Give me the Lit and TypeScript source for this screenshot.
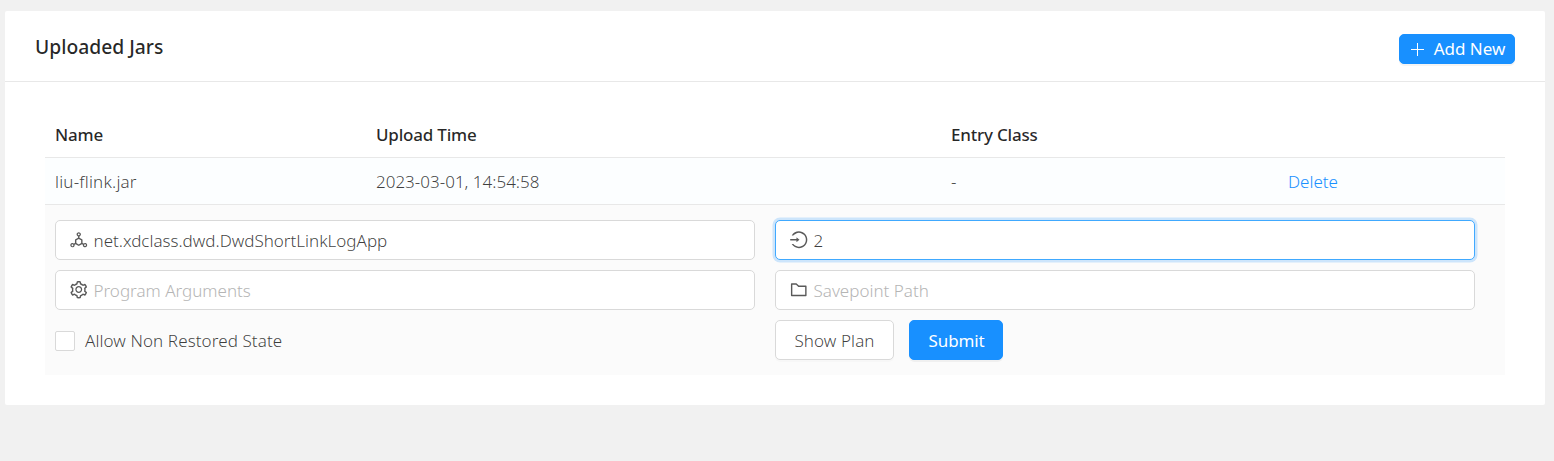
import { LitElement, html, css, svg } from "lit";
import { customElement } from "lit/decorators.js";

const ICONS: Record<string, string> = {
  deploy:
    "M888.3 693.2c-42.5-24.6-94.3-18-129.2 12.8l-53-30.7V523.6c0-15.7-8.4-30.3-22-38.1l-136-78.3v-67.1c44.2-15 76-56.8 76-106.1 0-61.9-50.1-112-112-112s-112 50.1-112 112c0 49.3 31.8 91.1 76 106.1v67.1l-136 78.3c-13.6 7.8-22 22.4-22 38.1v151.6l-53 30.7c-34.9-30.8-86.8-37.4-129.2-12.8-53.5 31-71.7 99.4-41 152.9 30.8 53.5 98.9 71.9 152.2 41 42.5-24.6 62.7-73 53.6-118.8l48.7-28.3 140.6 81c6.8 3.9 14.4 5.9 22 5.9s15.2-2 22-5.9L674.5 740l48.7 28.3c-9.1 45.7 11.2 94.2 53.6 118.8 53.3 30.9 121.5 12.6 152.2-41 30.8-53.6 12.6-122-40.7-152.9zm-673 138.4a47.6 47.6 0 01-65.2-17.6c-13.2-22.9-5.4-52.3 17.5-65.5a47.6 47.6 0 0165.2 17.6c13.2 22.9 5.4 52.3-17.5 65.5zM464 234a48.01 48.01 0 0196 0 48.01 48.01 0 01-96 0zm170 446.2l-122 70.3-122-70.3V539.8l122-70.3 122 70.3v140.4zm239.9 133.9c-13.2 22.9-42.4 30.8-65.2 17.6-22.8-13.2-30.7-42.6-17.5-65.5s42.4-30.8 65.2-17.6c22.9 13.2 30.7 42.5 17.5 65.5z",
  login:
    "M521.7 82c-152.5-.4-286.7 78.5-363.4 197.7-3.4 5.3.4 12.3 6.7 12.3h70.3c4.8 0 9.3-2.1 12.3-5.8 7-8.5 14.5-16.7 22.4-24.5 32.6-32.5 70.5-58.1 112.7-75.9 43.6-18.4 90-27.8 137.9-27.8 47.9 0 94.3 9.3 137.9 27.8 42.2 17.8 80.1 43.4 112.7 75.9 32.6 32.5 58.1 70.4 76 112.5C865.7 417.8 875 464.1 875 512c0 47.9-9.4 94.2-27.8 137.8-17.8 42.1-43.4 80-76 112.5s-70.5 58.1-112.7 75.9A352.8 352.8 0 01520.6 866c-47.9 0-94.3-9.4-137.9-27.8A353.84 353.84 0 01270 762.3c-7.9-7.9-15.3-16.1-22.4-24.5-3-3.7-7.6-5.8-12.3-5.8H165c-6.3 0-10.2 7-6.7 12.3C234.9 863.2 368.5 942 520.6 942c236.2 0 428-190.1 430.4-425.6C953.4 277.1 761.3 82.6 521.7 82zM395.02 624v-76h-314c-4.4 0-8-3.6-8-8v-56c0-4.4 3.6-8 8-8h314v-76c0-6.7 7.8-10.5 13-6.3l141.9 112a8 8 0 010 12.6l-141.9 112c-5.2 4.1-13 .4-13-6.3z",
  setting:
    "M924.8 625.7l-65.5-56c3.1-19 4.7-38.4 4.7-57.8s-1.6-38.8-4.7-57.8l65.5-56a32.03 32.03 0 009.3-35.2l-.9-2.6a443.74 443.74 0 00-79.7-137.9l-1.8-2.1a32.12 32.12 0 00-35.1-9.5l-81.3 28.9c-30-24.6-63.5-44-99.7-57.6l-15.7-85a32.05 32.05 0 00-25.8-25.7l-2.7-.5c-52.1-9.4-106.9-9.4-159 0l-2.7.5a32.05 32.05 0 00-25.8 25.7l-15.8 85.4a351.86 351.86 0 00-99 57.4l-81.9-29.1a32 32 0 00-35.1 9.5l-1.8 2.1a446.02 446.02 0 00-79.7 137.9l-.9 2.6c-4.5 12.5-.8 26.5 9.3 35.2l66.3 56.6c-3.1 18.8-4.6 38-4.6 57.1 0 19.2 1.5 38.4 4.6 57.1L99 625.5a32.03 32.03 0 00-9.3 35.2l.9 2.6c18.1 50.4 44.9 96.9 79.7 137.9l1.8 2.1a32.12 32.12 0 0035.1 9.5l81.9-29.1c29.8 24.5 63.1 43.9 99 57.4l15.8 85.4a32.05 32.05 0 0025.8 25.7l2.7.5a449.4 449.4 0 00159 0l2.7-.5a32.05 32.05 0 0025.8-25.7l15.7-85a350 350 0 0099.7-57.6l81.3 28.9a32 32 0 0035.1-9.5l1.8-2.1c34.8-41.1 61.6-87.5 79.7-137.9l.9-2.6c4.5-12.3.8-26.3-9.3-35zM788.3 465.9c2.5 15.1 3.8 30.6 3.8 46.1s-1.3 31-3.8 46.1l-6.6 40.1 74.7 63.9a370.03 370.03 0 01-42.6 73.6L721 702.8l-31.4 25.8c-23.9 19.6-50.5 35-79.3 45.8l-38.1 14.3-17.9 97a377.5 377.5 0 01-85 0l-17.9-97.2-37.8-14.5c-28.5-10.8-55-26.2-78.7-45.7l-31.4-25.9-93.4 33.2c-17-22.9-31.2-47.6-42.6-73.6l75.5-64.5-6.5-40c-2.4-14.9-3.7-30.3-3.7-45.5 0-15.3 1.2-30.6 3.7-45.5l6.5-40-75.5-64.5c11.3-26.1 25.6-50.7 42.6-73.6l93.4 33.2 31.4-25.9c23.7-19.5 50.2-34.9 78.7-45.7l37.9-14.3 17.9-97.2c28.1-3.2 56.8-3.2 85 0l17.9 97 38.1 14.3c28.7 10.8 55.4 26.2 79.3 45.8l31.4 25.8 92.8-32.9c17 22.9 31.2 47.6 42.6 73.6L781.8 426l6.5 39.9zM512 326c-97.2 0-176 78.8-176 176s78.8 176 176 176 176-78.8 176-176-78.8-176-176-176zm79.2 255.2A111.6 111.6 0 01512 614c-29.9 0-58-11.7-79.2-32.8A111.6 111.6 0 01400 502c0-29.9 11.7-58 32.8-79.2C454 401.6 482.1 390 512 390c29.9 0 58 11.6 79.2 32.8A111.6 111.6 0 01624 502c0 29.9-11.7 58-32.8 79.2z",
  folder:
    "M880 298.4H521L403.7 186.2a8.15 8.15 0 00-5.5-2.2H144c-17.7 0-32 14.3-32 32v592c0 17.7 14.3 32 32 32h736c17.7 0 32-14.3 32-32V330.4c0-17.7-14.3-32-32-32zM840 768H184V256h188.5l119.6 114.4H840V768z",
};

const icon = (name: string) => html`<svg class="icon" viewBox="64 64 896 896">${svg`<path d=${ICONS[name]}></path>`}</svg>`;

@customElement("app-root")
export class AppRoot extends LitElement {
  static styles = css`
    :host { display: block; box-sizing: border-box; height: 461px; padding: 11px 9px 0 5px; background: #f1f1f1;
      font: 300 17px/26px "Noto Sans", "Open Sans", sans-serif; color: rgba(0, 0, 0, 0.76); }
    * { box-sizing: border-box; }
    .card { background: #fff; border-radius: 2px; height: 394px; }
    .head { display: flex; justify-content: space-between; align-items: center; height: 71px; padding: 0 30px;
      border-bottom: 1px solid #e8e8e8; }
    .title { font-size: 19.3px; font-weight: 500; color: rgba(0, 0, 0, 0.85); padding-top: 1px; }
    .btn { display: flex; align-items: center; justify-content: center; height: 40px; border-radius: 5px; border: 1px solid #d9d9d9;
      background: #fff; box-shadow: 0 2px 0 rgba(0, 0, 0, 0.016); white-space: nowrap; }
    .btn span { padding-top: 2px; }
    .primary { background: #1890ff; border-color: #1890ff; color: #fff; box-shadow: 0 2px 0 rgba(0, 0, 0, 0.045); font-weight: 400; }
    .add { width: 116px; height: 30px; margin-top: 5px; gap: 10px; padding-left: 2px; }
    .add span { padding-top: 0; }
    .plus { width: 13px; height: 13px; stroke: #fff; stroke-width: 1; margin-top: 1px; }
    .body { padding: 30px 40px; }
    .row { display: grid; grid-template-columns: 321px 575px 337px 1fr; height: 47px; align-items: center; padding: 2px 10px 0;
      border-bottom: 1px solid #e8e8e8; }
    .cols { height: 46px; font-weight: 500; color: rgba(0, 0, 0, 0.85); padding-top: 1px; letter-spacing: -0.2px; }
    .item { background: #fcfeff; }
    .file { letter-spacing: 0.2px; }
    .link { color: #1890ff; }
    .form { display: grid; grid-template-columns: 700px 700px; column-gap: 20px; row-gap: 10px; padding: 15px 10px;
      background: #fbfbfb; height: 170px; align-content: start; }
    .field { display: flex; align-items: center; height: 40px; border: 1px solid #d9d9d9; border-radius: 5px; background: #fff; padding: 0 14px; gap: 6px; }
    .field span { padding-top: 2px; }
    .focus { border-color: #40a9ff; box-shadow: 0 0 0 2.5px rgba(24, 144, 255, 0.2); }
    .ph { color: #b5b5b5; }
    .icon { width: 17.5px; height: 17.5px; fill: rgba(0, 0, 0, 0.65); flex: none; }
    .check { display: flex; align-items: center; gap: 10px; letter-spacing: 0.1px; }
    .check .label { padding-top: 2px; }
    .box { width: 20px; height: 20px; border: 1px solid #d9d9d9; border-radius: 2px; background: #fff; margin-top: 1px; }
    .actions { display: flex; gap: 15px; }
    .plan { width: 119px; letter-spacing: 0.1px; }
    .submit { width: 94px; letter-spacing: -0.15px; padding-left: 1px; }
  `;

  render() {
    return html`<section class="card">
      <header class="head">
        <span class="title">Uploaded Jars</span>
        <div class="btn primary add"><svg class="plus" viewBox="0 0 13 13"><path d="M6.5 0v13M0 6.5h13"></path></svg><span>Add New</span></div>
      </header>
      <div class="body">
        <div class="row cols"><span>Name</span><span>Upload Time</span><span>Entry Class</span><span></span></div>
        <div class="row item"><span class="file">liu-flink.jar</span><span>2023-03-01, 14:54:58</span><span>-</span><span class="link">Delete</span></div>
        <div class="form">
          <div class="field">${icon("deploy")}<span>net.xdclass.dwd.DwdShortLinkLogApp</span></div>
          <div class="field focus">${icon("login")}<span>2</span></div>
          <div class="field">${icon("setting")}<span class="ph">Program Arguments</span></div>
          <div class="field">${icon("folder")}<span class="ph">Savepoint Path</span></div>
          <div class="check"><span class="box"></span><span class="label">Allow Non Restored State</span></div>
          <div class="actions"><div class="btn plan"><span>Show Plan</span></div><div class="btn primary submit"><span>Submit</span></div></div>
        </div>
      </div>
    </section>`;
  }
}
